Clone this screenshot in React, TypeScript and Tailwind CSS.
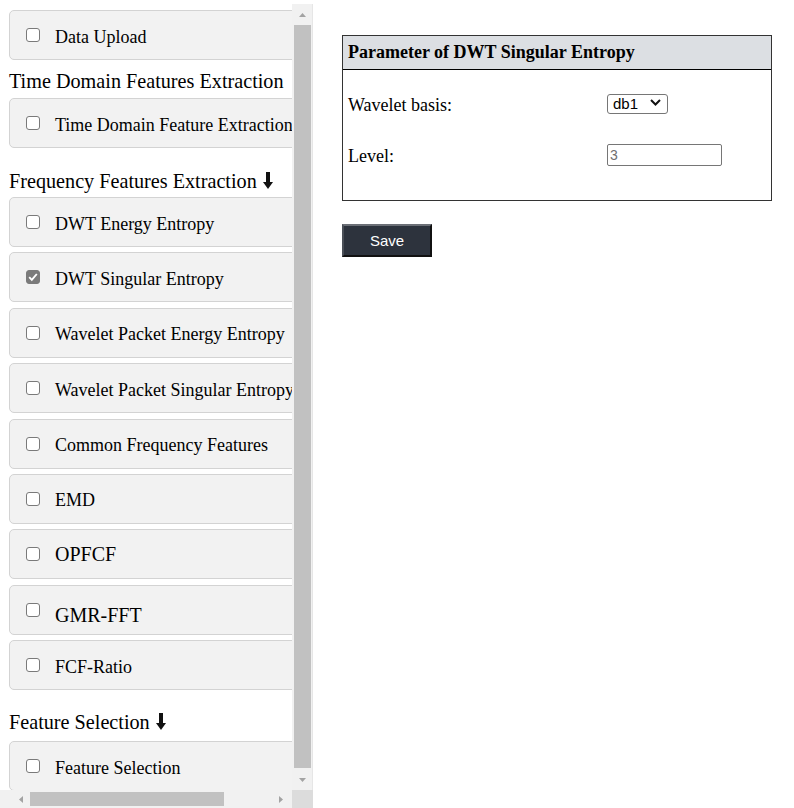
import React from 'react';

interface Item { label: string; checked?: boolean; big?: boolean; low?: boolean; }

const FREQ: Item[] = [
  { label: 'DWT Energy Entropy' },
  { label: 'DWT Singular Entropy', checked: true },
  { label: 'Wavelet Packet Energy Entropy' },
  { label: 'Wavelet Packet Singular Entropy' },
  { label: 'Common Frequency Features' },
  { label: 'EMD' },
  { label: 'OPFCF', big: true },
  { label: 'GMR-FFT', big: true, low: true },
  { label: 'FCF-Ratio' },
];

function Check({ checked }: { checked?: boolean }) {
  return (
    <span className="relative block w-[14px] h-[14px] shrink-0">
      <input
        type="checkbox"
        defaultChecked={checked}
        className="block appearance-none w-[14px] h-[14px] border border-[#7a7a7a] rounded-[3px] bg-white checked:bg-[#7b7b7b] checked:border-[#7b7b7b]"
      />
      {checked && (
        <svg width="14" height="14" viewBox="0 0 14 14" className="absolute left-0 top-0 pointer-events-none">
          <polyline points="3.2,7.2 5.8,9.8 10.8,4" fill="none" stroke="#fff" strokeWidth="1.9" />
        </svg>
      )}
    </span>
  );
}

function Card({ label, checked, big, low }: Item) {
  return (
    <label className="flex items-center h-[50px] w-[340px] shrink-0 pl-[16px] gap-[15px] bg-[#f2f2f2] border border-[#d3d3d3] rounded-[5px] whitespace-nowrap">
      <Check checked={checked} />
      <span className={big ? (low ? 'text-[20px] pt-[10px]' : 'text-[20px]') : 'text-[18px] pt-[4px]'}>{label}</span>
    </label>
  );
}

function DownArrow() {
  return (
    <svg width="10" height="18" viewBox="0 0 10 18" className="inline-block ml-[6px] align-[-2px]">
      <rect x="3" y="0" width="4" height="11" fill="#111" />
      <polygon points="0,10 10,10 5,17" fill="#111" />
    </svg>
  );
}

function Heading({ children, arrow }: { children: React.ReactNode; arrow?: boolean }) {
  return (
    <div className="pl-[9px] text-[20.2px] leading-[22px] whitespace-nowrap">
      {children}
      {arrow && <DownArrow />}
    </div>
  );
}

function Tri({ dir }: { dir: 'up' | 'down' | 'left' | 'right' }) {
  const pts = {
    up: '0,4 7,4 3.5,0',
    down: '0,0 7,0 3.5,4',
    left: '4,0 4,7 0,3.5',
    right: '0,0 0,7 4,3.5',
  }[dir];
  const vert = dir === 'up' || dir === 'down';
  return (
    <svg width={vert ? 7 : 4} height={vert ? 4 : 7} viewBox={vert ? '0 0 7 4' : '0 0 4 7'}>
      <polygon points={pts} fill="#a3a3a3" />
    </svg>
  );
}

export default function App() {
  return (
    <div className="flex bg-white text-black min-h-[808px] font-['Liberation_Serif','Times_New_Roman',serif]">
      {/* left scroll panel */}
      <div className="mt-[4px] h-[804px] w-[313px] shrink-0 flex flex-col">
        <div className="flex flex-1 min-h-0">
          <div className="w-[292px] overflow-hidden pt-[6px] pl-[9px]">
            <Card label="Data Upload" />
            <div className="mt-[10px] mb-[6px] -ml-[9px]">
              <Heading>Time Domain Features Extraction</Heading>
            </div>
            <Card label="Time Domain Feature Extraction" />
            <div className="mt-[22px] mb-[5px] -ml-[9px]">
              <Heading arrow>Frequency Features Extraction</Heading>
            </div>
            <div className="flex flex-col gap-[5.4px]">
              {FREQ.map(it => <Card key={it.label} {...it} />)}
            </div>
            <div className="mt-[21px] mb-[8px] -ml-[9px]">
              <Heading arrow>Feature Selection</Heading>
            </div>
            <Card label="Feature Selection" />
          </div>
          <div className="w-[21px] bg-[#f1f1f1] border-r border-[#e6e6e6] flex flex-col">
            <div className="h-[21px] flex items-center justify-center pl-[1px]"><Tri dir="up" /></div>
            <div className="flex-1 mx-[2px] mr-[1px] mb-[1px] bg-[#c1c1c1]" />
            <div className="h-[21px] flex items-center justify-center pl-[1px]"><Tri dir="down" /></div>
          </div>
        </div>
        <div className="flex h-[18px]">
          <div className="w-[292px] bg-[#f1f1f1] flex items-stretch pl-[9px]">
            <div className="w-[21px] flex items-center justify-center pl-[2px]"><Tri dir="left" /></div>
            <div className="flex-1 flex py-[2px]">
              <div className="w-[194px] bg-[#c1c1c1]" />
            </div>
            <div className="w-[21px] flex items-center justify-center pr-[2px]"><Tri dir="right" /></div>
          </div>
          <div className="w-[21px] bg-[#dcdcdc]" />
        </div>
      </div>

      {/* right parameter panel */}
      <div className="pt-[35px] pl-[29px]">
        <div className="w-[430px] border border-[#333333]">
          <div className="h-[34px] bg-[#dcdfe3] border-b border-black pl-[5px] flex items-center text-[18px] font-bold">
            Parameter of DWT Singular Entropy
          </div>
          <div className="pt-[14px] pb-[25px] flex flex-col gap-[11px]">
            <div className="h-[40px] flex items-center pl-[5px]">
              <span className="w-[259px] text-[18px] pt-[2px]">Wavelet basis:</span>
              <div className="relative">
                <select defaultValue="db1" className="appearance-none w-[61px] h-[20px] border border-[#767676] rounded-[3px] bg-white pl-[5px] text-[15px] leading-[18px] font-['Liberation_Sans',Arial,sans-serif]">
                  <option value="db1">db1</option>
                  <option value="db2">db2</option>
                  <option value="db3">db3</option>
                </select>
                <svg width="11" height="7" viewBox="0 0 11 7" className="absolute left-[43px] top-[7px] pointer-events-none">
                  <polyline points="1,1 5.5,5.5 10,1" fill="none" stroke="#111" strokeWidth="2" />
                </svg>
              </div>
            </div>
            <div className="h-[40px] flex items-center pl-[5px]">
              <span className="w-[259px] text-[18px] pt-[2px]">Level:</span>
              <input placeholder="3" className="w-[115px] h-[22px] border border-[#767676] rounded-[2px] pl-[2px] text-[14px] font-['Liberation_Sans',Arial,sans-serif] placeholder:text-[#6f6f6f] outline-none" />
            </div>
          </div>
        </div>
        <button className="mt-[23px] w-[90px] h-[33px] pt-[1px] bg-[#2d333d] text-white text-[15px] font-['Liberation_Sans',Arial,sans-serif] border-2 border-t-[#6b6f76] border-l-[#4a4f57] border-r-[#111111] border-b-[#111111]">
          Save
        </button>
      </div>
    </div>
  );
}
